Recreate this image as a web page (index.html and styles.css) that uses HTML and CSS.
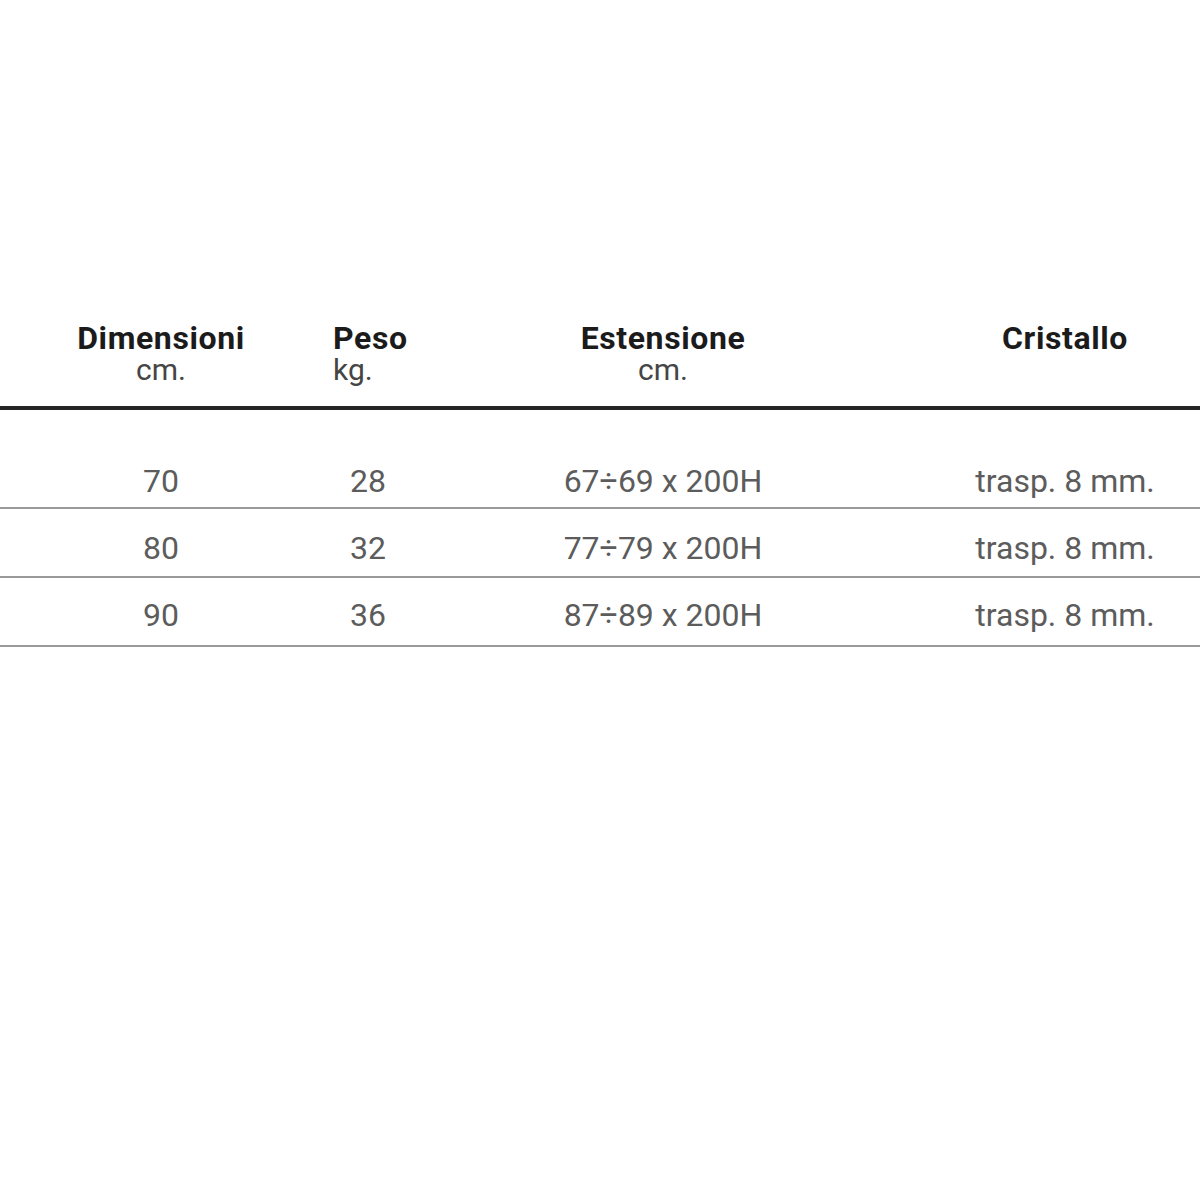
FILE: index.html
```html
<!DOCTYPE html>
<html lang="it">
<head>
<meta charset="utf-8">
<title>Tabella</title>
<link rel="stylesheet" href="styles.css">
</head>
<body>
<div class="spec">
  <div class="row head">
    <div class="cell c1"><div class="t">Dimensioni</div><div class="u">cm.</div></div>
    <div class="cell c2 left"><div class="t">Peso</div><div class="u">kg.</div></div>
    <div class="cell c3"><div class="t">Estensione</div><div class="u">cm.</div></div>
    <div class="cell c4"><div class="t">Cristallo</div></div>
  </div>
  <div class="row data first">
    <div class="cell c1">70</div>
    <div class="cell c2">28</div>
    <div class="cell c3">67÷69 x 200H</div>
    <div class="cell c4">trasp. 8 mm.</div>
  </div>
  <div class="row data">
    <div class="cell c1">80</div>
    <div class="cell c2">32</div>
    <div class="cell c3">77÷79 x 200H</div>
    <div class="cell c4">trasp. 8 mm.</div>
  </div>
  <div class="row data last">
    <div class="cell c1">90</div>
    <div class="cell c2">36</div>
    <div class="cell c3">87÷89 x 200H</div>
    <div class="cell c4">trasp. 8 mm.</div>
  </div>
</div>
</body>
</html>
```
FILE: styles.css
```css
html, body {
  margin: 0;
  padding: 0;
  background: #ffffff;
}
body {
  width: 1200px;
  height: 1200px;
  font-family: Roboto, "Liberation Sans", sans-serif;
}
.spec {
  padding-top: 322px;
}
.row {
  display: grid;
  grid-template-columns: 322px 92px 498px 1fr;
}
.cell {
  text-align: center;
}
.c4 {
  padding-left: 18px;
}
.head {
  padding-bottom: 20px;
  border-bottom: 4px solid #242424;
}
.head .t {
  font-size: 32px;
  font-weight: 700;
  letter-spacing: 0.6px;
  line-height: 32px;
  color: #1b1b1b;
}
.head .u {
  font-size: 30px;
  font-weight: 400;
  line-height: 32px;
  color: #454545;
}
.head .left {
  text-align: left;
  padding-left: 11px;
}
.data {
  font-size: 32px;
  line-height: 36px;
  color: #5c5c5c;
  padding-top: 21px;
  padding-bottom: 10px;
  border-bottom: 2px solid #9a9a9a;
}
.data.first {
  padding-top: 53px;
  padding-bottom: 8px;
}
.data.last {
  padding-top: 19px;
  padding-bottom: 12px;
}
```
